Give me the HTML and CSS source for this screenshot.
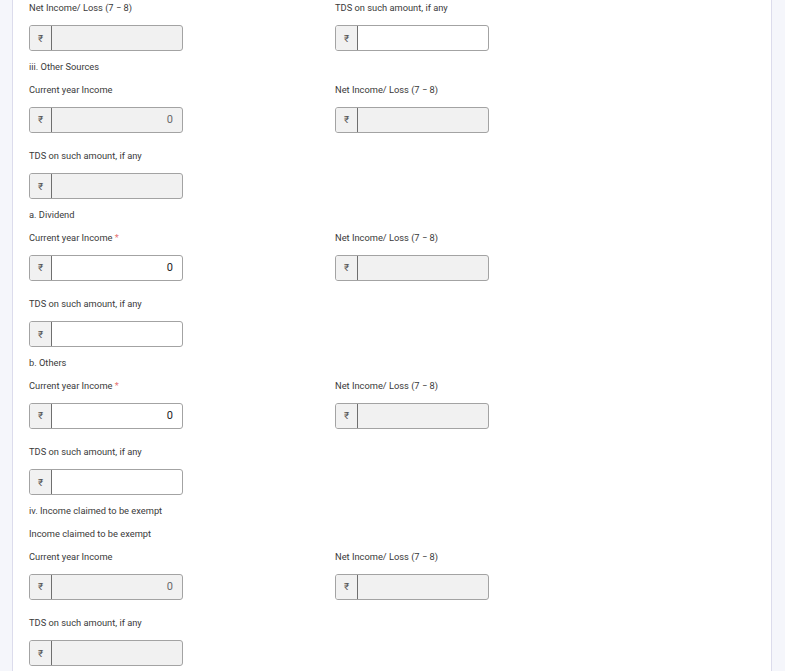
FILE: index.html
```html
<!DOCTYPE html>
<html lang="en">
<head>
    <meta charset="UTF-8">
    <meta name="viewport" content="width=device-width, initial-scale=1.0">
    <title>Income Details</title>
    <link rel="stylesheet" href="styles.css">
</head>
<body>
    <div class="page">
        <div class="sheet">
            <div class="form">
                <div class="row">
                    <div class="field">
                        <label>Net Income/ Loss (7 &minus; 8)</label>
                        <div class="amount disabled"><span class="prefix">₹</span><span class="value"></span></div>
                    </div>
                    <div class="field">
                        <label>TDS on such amount, if any</label>
                        <div class="amount"><span class="prefix">₹</span><span class="value"></span></div>
                    </div>
                </div>

                <p class="heading">iii. Other Sources</p>
                <div class="row">
                    <div class="field">
                        <label>Current year Income</label>
                        <div class="amount disabled"><span class="prefix">₹</span><span class="value">0</span></div>
                    </div>
                    <div class="field">
                        <label>Net Income/ Loss (7 &minus; 8)</label>
                        <div class="amount disabled"><span class="prefix">₹</span><span class="value"></span></div>
                    </div>
                </div>
                <div class="row">
                    <div class="field">
                        <label>TDS on such amount, if any</label>
                        <div class="amount disabled"><span class="prefix">₹</span><span class="value"></span></div>
                    </div>
                </div>

                <p class="heading">a. Dividend</p>
                <div class="row">
                    <div class="field">
                        <label>Current year Income <span class="req">*</span></label>
                        <div class="amount"><span class="prefix">₹</span><span class="value">0</span></div>
                    </div>
                    <div class="field">
                        <label>Net Income/ Loss (7 &minus; 8)</label>
                        <div class="amount disabled"><span class="prefix">₹</span><span class="value"></span></div>
                    </div>
                </div>
                <div class="row">
                    <div class="field">
                        <label>TDS on such amount, if any</label>
                        <div class="amount"><span class="prefix">₹</span><span class="value"></span></div>
                    </div>
                </div>

                <p class="heading">b. Others</p>
                <div class="row">
                    <div class="field">
                        <label>Current year Income <span class="req">*</span></label>
                        <div class="amount"><span class="prefix">₹</span><span class="value">0</span></div>
                    </div>
                    <div class="field">
                        <label>Net Income/ Loss (7 &minus; 8)</label>
                        <div class="amount disabled"><span class="prefix">₹</span><span class="value"></span></div>
                    </div>
                </div>
                <div class="row">
                    <div class="field">
                        <label>TDS on such amount, if any</label>
                        <div class="amount"><span class="prefix">₹</span><span class="value"></span></div>
                    </div>
                </div>

                <p class="heading">iv. Income claimed to be exempt</p>
                <p class="heading">Income claimed to be exempt</p>
                <div class="row">
                    <div class="field">
                        <label>Current year Income</label>
                        <div class="amount disabled"><span class="prefix">₹</span><span class="value">0</span></div>
                    </div>
                    <div class="field">
                        <label>Net Income/ Loss (7 &minus; 8)</label>
                        <div class="amount disabled"><span class="prefix">₹</span><span class="value"></span></div>
                    </div>
                </div>
                <div class="row">
                    <div class="field">
                        <label>TDS on such amount, if any</label>
                        <div class="amount disabled"><span class="prefix">₹</span><span class="value"></span></div>
                    </div>
                </div>
            </div>
        </div>
    </div>
</body>
</html>
```

FILE: styles.css
```css
:root {
    --side-bg: #f5f6fb;
    --side-border: #dcdcec;
    --text: #3a3a3a;
    --field-border: #a3a3a3;
    --disabled-bg: #f1f1f1;
    --required: #e57373;
}

html, body {
    margin: 0;
    padding: 0;
    height: 100%;
    overflow: hidden;
}

body {
    font-family: Roboto, 'Liberation Sans', Arial, sans-serif;
    font-size: 9.3px;
    color: var(--text);
    background: var(--side-bg);
}

.page {
    display: flex;
    height: 100%;
    padding: 0 13px 0 12px;
    box-sizing: border-box;
}

.sheet {
    flex: 1;
    background: #ffffff;
    border-left: 1px solid var(--side-border);
    border-right: 1px solid var(--side-border);
    padding: 2px 16px 0 16px;
}

.heading {
    margin: 0 0 11px 0;
    line-height: 12px;
}

.row {
    display: grid;
    grid-template-columns: 154px 154px;
    column-gap: 152px;
    margin-bottom: 9.5px;
}

/* consecutive rows need a bit more room than heading -> row */
.row + .row {
    padding-top: 8px;
}

.field label {
    display: block;
    line-height: 12px;
    margin-bottom: 11px;
}

.req {
    color: var(--required);
}

.amount {
    display: flex;
    height: 26px;
    box-sizing: border-box;
    border: 1px solid var(--field-border);
    border-radius: 3px;
    background: #ffffff;
    overflow: hidden;
}

.amount.disabled {
    background: var(--disabled-bg);
}

.prefix {
    width: 21px;
    flex: none;
    display: flex;
    align-items: center;
    justify-content: center;
    background: var(--disabled-bg);
    border-right: 1px solid #6f6f6f;
    color: #555555;
    font-size: 10px;
}

.value {
    flex: 1;
    display: flex;
    align-items: center;
    justify-content: flex-end;
    padding-right: 9px;
    font-size: 11px;
    color: #222222;
}

.disabled .value {
    color: #6a6a6a;
}
```
